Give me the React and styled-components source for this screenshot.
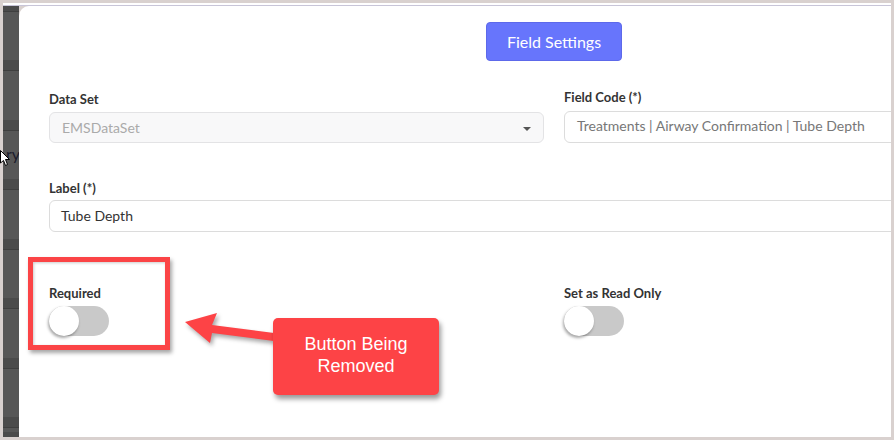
import styled, { createGlobalStyle } from "styled-components";

const GlobalStyle = createGlobalStyle`
  html, body {
    margin: 0;
    padding: 0;
  }
  * {
    box-sizing: border-box;
  }
`;

const Frame = styled.div`
  position: relative;
  width: 894px;
  height: 440px;
  padding: 3px;
  background-color: #d9d1cf;
  overflow: hidden;
  font-family: Lato, "Noto Sans", sans-serif;
`;

const Screen = styled.div`
  display: flex;
  flex-direction: column;
  height: 100%;
  overflow: hidden;
`;

const TopLine = styled.div`
  height: 3px;
  flex-shrink: 0;
  border-top: 2px solid #ffffff;
  border-bottom: 1px solid #c8c5d8;
`;

const Body = styled.div`
  display: flex;
  flex: 1;
  overflow: hidden;
`;

const Backdrop = styled.div`
  width: 16px;
  flex-shrink: 0;
  background-color: #575757;
  background-image: repeating-linear-gradient(
    to bottom,
    #4b4b4b 0px,
    #4b4b4b 10px,
    #3f3f3f 10px,
    #3f3f3f 11px,
    #575757 11px,
    #575757 59.5px
  );
  background-position: 0 -5px;

  .behind {
    margin-top: 139px;
    padding-left: 3px;
    white-space: nowrap;
    font-size: 16px;
    line-height: 18px;
    color: #1c1c2c;
  }
`;

const Modal = styled.div`
  display: flex;
  flex-direction: column;
  width: 1074px;
  flex-shrink: 0;
  padding: 16px 34px 0 30px;
  background-color: #ffffff;
  border-top-left-radius: 10px;
`;

const HeaderButton = styled.button`
  align-self: center;
  height: 39px;
  padding: 0 20px;
  border: 1px solid #5d69ea;
  border-radius: 4px;
  background-color: #6775fc;
  color: #ffffff;
  font-family: Lato, "Noto Sans", sans-serif;
  font-size: 16px;
`;

const Row = styled.div`
  display: grid;
  grid-template-columns: 495px 495px;
  column-gap: 20px;
  align-items: end;
  margin-top: ${(p) => p.$top}px;
`;

const Field = styled.div`
  display: flex;
  flex-direction: column;
  grid-column: ${(p) => (p.$wide ? "1 / -1" : "auto")};
`;

const Label = styled.label`
  display: block;
  margin-bottom: ${(p) => p.$gap || 5}px;
  font-size: 13px;
  line-height: 16px;
  font-weight: 700;
  color: #333333;
`;

const Select = styled.div`
  position: relative;
  display: flex;
  align-items: center;
  height: 31px;
  padding: 0 12px;
  border: 1px solid #e3e3e5;
  border-radius: 6px;
  background-color: #f8f8f9;
  font-size: 14px;
  color: #aaaaaa;

  &::after {
    content: "";
    position: absolute;
    right: 12px;
    top: 14px;
    border-left: 4px solid transparent;
    border-right: 4px solid transparent;
    border-top: 4px solid #555555;
  }
`;

const Input = styled.div`
  display: flex;
  align-items: ${(p) => (p.$high ? "flex-start" : "center")};
  height: 32px;
  padding: ${(p) => (p.$high ? "5px 12px 0" : "0 11px 2px")};
  border: 1px solid #dcdcdc;
  border-radius: 6px;
  background-color: #ffffff;
  font-size: 14px;
  color: ${(p) => (p.$muted ? "#777777" : "#333333")};
  white-space: nowrap;
`;

const Toggle = styled.div`
  position: relative;
  width: 60px;
  height: 30px;
  border-radius: 15px;
  background-color: #c9c9c9;

  &::before {
    content: "";
    position: absolute;
    left: 0;
    top: 0;
    width: 30px;
    height: 30px;
    border-radius: 50%;
    background-color: #ffffff;
    box-shadow: -1px 2px 3px rgba(0, 0, 0, 0.35);
  }
`;

const HighlightBox = styled.div`
  position: absolute;
  left: 28px;
  top: 257px;
  width: 142px;
  height: 93px;
  border: 5px solid #fb4446;
  box-shadow: 2px 3px 4px rgba(0, 0, 0, 0.35), inset 1px 1px 3px rgba(0, 0, 0, 0.2);
`;

const Arrow = styled.svg`
  position: absolute;
  left: 180px;
  top: 305px;
  filter: drop-shadow(2px 3px 2px rgba(0, 0, 0, 0.35));
`;

const Callout = styled.div`
  position: absolute;
  left: 273px;
  top: 318px;
  width: 166px;
  height: 77px;
  display: flex;
  align-items: center;
  justify-content: center;
  padding-bottom: 3px;
  border-radius: 5px;
  background-color: #fd4346;
  box-shadow: 2px 4px 5px rgba(0, 0, 0, 0.4);
  color: #ffffff;
  font-family: "Liberation Sans", Arial, sans-serif;
  font-size: 18px;
  line-height: 22px;
  text-align: center;
`;

const Cursor = styled.svg`
  position: absolute;
  left: 0;
  top: 150px;
`;

export default function App() {
  return (
    <>
      <GlobalStyle />
      <Frame>
        <Screen>
          <TopLine />
          <Body>
            <Backdrop>
              <div className="behind">ry</div>
            </Backdrop>
            <Modal>
              <HeaderButton>Field Settings</HeaderButton>

              <Row $top={28}>
                <Field>
                  <Label>Data Set</Label>
                  <Select>EMSDataSet</Select>
                </Field>
                <Field>
                  <Label $gap={6}>Field Code (*)</Label>
                  <Input $muted $high>
                    Treatments | Airway Confirmation | Tube Depth
                  </Input>
                </Field>
              </Row>

              <Row $top={37}>
                <Field $wide>
                  <Label $gap={4}>Label (*)</Label>
                  <Input>Tube Depth</Input>
                </Field>
              </Row>

              <Row $top={53}>
                <Field>
                  <Label>Required</Label>
                  <Toggle />
                </Field>
                <Field>
                  <Label>Set as Read Only</Label>
                  <Toggle />
                </Field>
              </Row>
            </Modal>
          </Body>
        </Screen>

        <HighlightBox />
        <Arrow width="100" height="45" viewBox="0 0 100 45">
          <polygon
            points="5,17 37,8 32,20 94,28 94,36 32,28 30,38"
            fill="#fd4346"
          />
        </Arrow>
        <Callout>
          Button Being
          <br />
          Removed
        </Callout>
        <Cursor width="10" height="17" viewBox="0 0 10 17">
          <polygon
            points="0.5,0.5 0.5,13 3.5,10.5 5.5,15.5 7.5,14.5 5.5,9.5 9.5,9.5"
            fill="#ffffff"
            stroke="#000000"
            strokeWidth="1"
          />
        </Cursor>
      </Frame>
    </>
  );
}
